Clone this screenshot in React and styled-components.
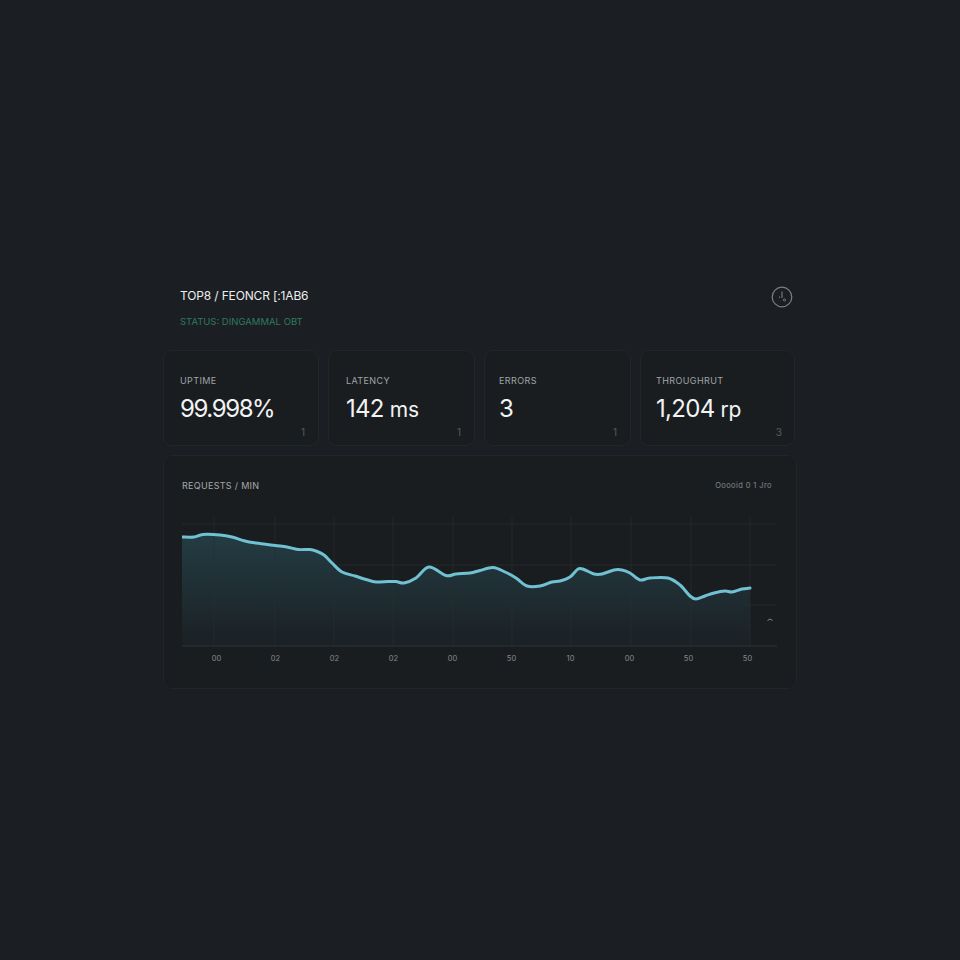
import styled, { createGlobalStyle } from "styled-components";

const GlobalStyle = createGlobalStyle`
    html, body {
        margin: 0;
        padding: 0;
        background-color: #1b1f23;
    }
`;

const Page = styled.div`
    width: 960px;
    height: 960px;
    padding: 283px 0 0 163px;
    box-sizing: border-box;
    background-color: #1b1f23;
    font-family: Inter, "Liberation Sans", sans-serif;
    overflow: hidden;
`;

const Panel = styled.div`
    width: 634px;
    display: flex;
    flex-direction: column;
`;

const Header = styled.div`
    height: 67px;
    padding: 0 4px 0 17px;
    display: flex;
    justify-content: space-between;
    align-items: flex-start;
`;

const TitleBlock = styled.div`
    display: flex;
    flex-direction: column;
    gap: 13px;
    padding-top: 6px;
`;

const Title = styled.div`
    font-size: 12px;
    line-height: 14px;
    font-weight: 400;
    letter-spacing: -0.15px;
    white-space: nowrap;
    color: #eceeee;
`;

const Status = styled.div`
    font-size: 9.5px;
    line-height: 12px;
    white-space: nowrap;
    color: #2f7a5e;
`;

const ClockIcon = styled.svg`
    width: 22px;
    height: 22px;
    margin-top: 3px;
`;

const Stats = styled.div`
    display: flex;
    gap: 9px;
    margin-bottom: 9px;
`;

const StatCard = styled.div`
    position: relative;
    width: ${(props) => props.$width}px;
    height: 96px;
    box-sizing: border-box;
    padding: 25px 0 0 ${(props) => props.$pad}px;
    background-color: #1a1d20;
    border: 1px solid #212629;
    border-radius: 9px;
`;

const StatLabel = styled.div`
    font-size: 9px;
    line-height: 10px;
    letter-spacing: 0.4px;
    white-space: nowrap;
    color: #a0a4a6;
`;

const StatValue = styled.div`
    margin-top: 8px;
    font-size: 24px;
    line-height: 30px;
    letter-spacing: ${(props) => props.$spacing}px;
    white-space: nowrap;
    color: #f2f3f3;
`;

const StatUnit = styled.span`
    font-size: 21px;
    letter-spacing: 0;
`;

const Corner = styled.div`
    position: absolute;
    right: ${(props) => props.$right}px;
    bottom: 7px;
    font-size: 10px;
    line-height: 12px;
    color: #565b5e;
`;

const ChartCard = styled.div`
    height: 234px;
    box-sizing: border-box;
    padding: 23px 19px 0 18px;
    background-color: #1a1d20;
    border: 1px solid #212629;
    border-radius: 9px;
`;

const ChartHead = styled.div`
    display: flex;
    justify-content: space-between;
    align-items: center;
    height: 12px;
    padding-right: 5px;
    margin-bottom: 24px;
`;

const ChartTitle = styled.div`
    font-size: 9px;
    letter-spacing: 0.3px;
    white-space: nowrap;
    color: #a6a9ab;
`;

const ChartRange = styled.div`
    font-size: 7.5px;
    letter-spacing: 0.4px;
    white-space: nowrap;
    color: #85898c;
`;

const ChartSvg = styled.svg`
    display: block;
    width: 596px;
    height: 133px;
`;

const Ticks = styled.div`
    display: flex;
    padding: 6px 0 0 5px;
`;

const Tick = styled.div`
    width: 59.4px;
    text-align: center;
    font-size: 7.5px;
    line-height: 10px;
    color: #85898c;
`;

const stats = [
    { label: "UPTIME", value: "99.998%", spacing: -1.4, corner: "1", width: 156, pad: 16, right: 13 },
    { label: "LATENCY", value: "142", unit: " ms", spacing: -0.7, corner: "1", width: 147, pad: 17, right: 13 },
    { label: "ERRORS", value: "3", spacing: -0.7, corner: "1", width: 147, pad: 14, right: 13 },
    { label: "THROUGHRUT", value: "1,204", unit: " rp", spacing: -0.7, corner: "3", width: 155, pad: 15, right: 12 },
];

const ticks = ["00", "02", "02", "02", "00", "50", "10", "00", "50", "50"];

// screen coordinates read off the reference, shifted into the svg below
const raw = [
    [182, 537], [194, 537], [203, 534.5], [220, 535], [232, 537], [245, 541], [256, 543], [275, 545.5],
    [287, 547], [298, 549.5], [310, 549.5], [316, 551], [324, 555], [332, 563], [342, 572], [355, 576],
    [366, 579.5], [376, 582], [388, 581.5], [396, 581.5], [404, 583], [416, 578], [429, 567], [446, 575.5],
    [456, 574], [470, 573], [480, 570.5], [493, 567.5], [505, 572], [516, 578], [527, 586], [540, 586],
    [552, 582], [560, 581], [570, 577], [578, 569], [584, 569.5], [594, 574], [602, 574], [614, 570],
    [622, 570], [630, 573], [640, 580], [650, 578], [668, 578], [680, 585], [690, 596], [696, 599],
    [705, 596], [714, 593], [725, 591], [732, 592], [742, 589], [750, 588],
];
const points = raw.map(([x, y]) => [x - 182, y - 515]);

// catmull-rom through the points, so the line has no hard corners
const curve = points.map(([x, y], i) => {
    if (i === 0) return `M${x} ${y}`;
    const p0 = points[i - 2] || points[i - 1];
    const p1 = points[i - 1];
    const p3 = points[i + 1] || [x, y];
    const c1 = [p1[0] + (x - p0[0]) / 6, p1[1] + (y - p0[1]) / 6];
    const c2 = [x - (p3[0] - p1[0]) / 6, y - (p3[1] - p1[1]) / 6];
    return `C${c1[0]} ${c1[1]} ${c2[0]} ${c2[1]} ${x} ${y}`;
}).join(" ");
const area = `${curve} L568 131 L0 131 Z`;

const gridX = [32, 93, 152, 211, 271, 330, 389, 449, 509, 568];
const gridY = [9, 50, 90];

function Chart() {
    return <ChartSvg viewBox="0 0 596 133">
        <defs>
            <linearGradient id="area" x1="0" y1="0" x2="0" y2="1">
                <stop offset="0" stopColor="#233c43" />
                <stop offset="1" stopColor="#1b2024" />
            </linearGradient>
        </defs>
        <path d={area} fill="url(#area)" />
        {gridX.map((x) => <line key={x} x1={x} y1="2" x2={x} y2="131" stroke="#2a2f33" strokeOpacity="0.6" />)}
        {gridY.map((y) => <line key={y} x1="0" y1={y} x2="595" y2={y} stroke="#2a2f33" strokeOpacity="0.6" />)}
        <line x1="0" y1="131" x2="595" y2="131" stroke="#2e3337" />
        <path d={curve} fill="none" stroke="#70c2d2" strokeWidth="3" strokeLinejoin="round" strokeLinecap="round" />
        <path d="M585.5 105.5 Q588 102.5 590.5 105.5" fill="none" stroke="#85898c" />
    </ChartSvg>;
}

export default function App() {
    return <Page>
        <GlobalStyle />
        <Panel>
            <Header>
                <TitleBlock>
                    <Title>TOP8 / FEONCR [:1AB6</Title>
                    <Status>STATUS: DINGAMMAL OBT</Status>
                </TitleBlock>
                <ClockIcon viewBox="0 0 22 22" fill="none" stroke="#7c8082">
                    <circle cx="11" cy="11" r="9.8" strokeWidth="1.2" />
                    <path d="M11 5.5V12" strokeWidth="1.1" />
                    <path d="M8.5 10.5V12" strokeWidth="0.9" />
                    <circle cx="13.5" cy="14" r="1.1" strokeWidth="0.9" />
                </ClockIcon>
            </Header>
            <Stats>
                {stats.map((stat) => <StatCard key={stat.label} $width={stat.width} $pad={stat.pad}>
                    <StatLabel>{stat.label}</StatLabel>
                    <StatValue $spacing={stat.spacing}>{stat.value}{stat.unit && <StatUnit>{stat.unit}</StatUnit>}</StatValue>
                    <Corner $right={stat.right}>{stat.corner}</Corner>
                </StatCard>)}
            </Stats>
            <ChartCard>
                <ChartHead>
                    <ChartTitle>REQUESTS / MIN</ChartTitle>
                    <ChartRange>Ooooid 0 1 Jro</ChartRange>
                </ChartHead>
                <Chart />
                <Ticks>
                    {ticks.map((tick, index) => <Tick key={index}>{tick}</Tick>)}
                </Ticks>
            </ChartCard>
        </Panel>
    </Page>;
}
